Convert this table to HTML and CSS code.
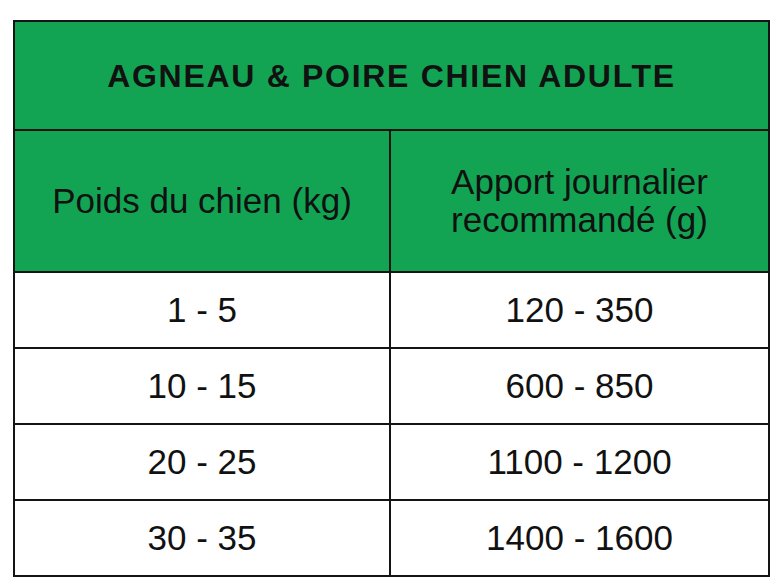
FILE: index.html
```html
<!DOCTYPE html>
<html lang="fr">
<head>
<meta charset="utf-8">
<title>Agneau &amp; Poire Chien Adulte</title>
<link rel="stylesheet" href="styles.css">
</head>
<body>
<div class="page">
  <table class="ration">
    <colgroup>
      <col class="col-weight">
      <col class="col-amount">
    </colgroup>
    <thead>
      <tr class="title-row">
        <th colspan="2" class="title">AGNEAU &amp; POIRE CHIEN ADULTE</th>
      </tr>
      <tr class="head-row">
        <th>Poids du chien (kg)</th>
        <th>Apport journalier<br>recommandé (g)</th>
      </tr>
    </thead>
    <tbody>
      <tr><td>1 - 5</td><td>120 - 350</td></tr>
      <tr><td>10 - 15</td><td>600 - 850</td></tr>
      <tr><td>20 - 25</td><td>1100 - 1200</td></tr>
      <tr><td>30 - 35</td><td>1400 - 1600</td></tr>
    </tbody>
  </table>
</div>
</body>
</html>
```

FILE: styles.css
```css
html, body {
  margin: 0;
  padding: 0;
  background: #ffffff;
}

.page {
  padding: 20px 10px 0 13px;
}

.ration {
  width: 757px;
  border-collapse: collapse;
  table-layout: fixed;
  font-family: "Liberation Sans", Arial, sans-serif;
  color: #111111;
}

.col-weight {
  width: 376px;
}

.ration th,
.ration td {
  border: 2px solid #141414;
  text-align: center;
  vertical-align: middle;
  padding: 0;
  font-weight: normal;
  font-size: 35px;
  line-height: 38px;
}

.ration thead th {
  background: #13a453;
}

.title-row {
  height: 109px;
}

.ration th.title {
  font-weight: bold;
  font-size: 32px;
  letter-spacing: 1.7px;
}

.head-row {
  height: 142px;
}

.ration tbody tr {
  height: 76px;
}
```
